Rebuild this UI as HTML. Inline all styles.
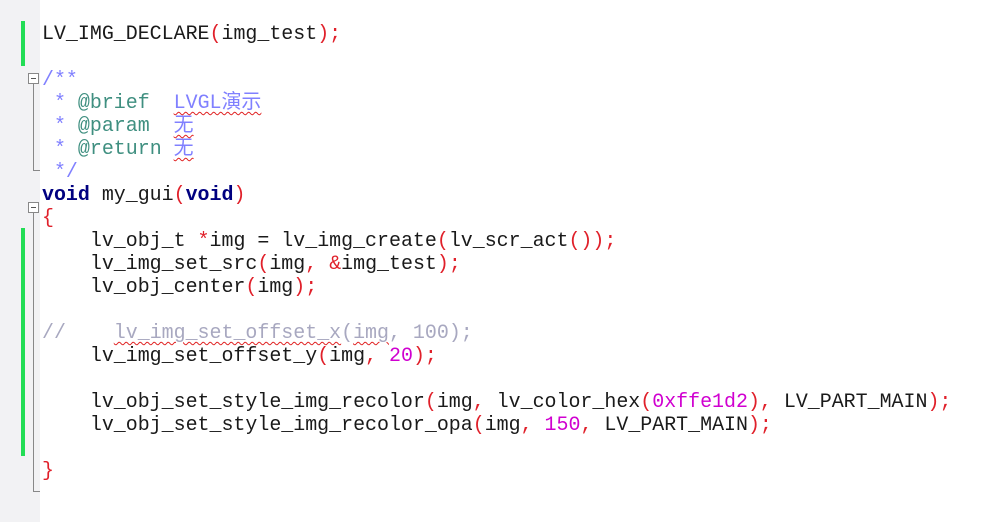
<!DOCTYPE html>
<html><head><meta charset="utf-8"><style>
body{margin:0;width:986px;height:522px;background:#fff;position:relative;overflow:hidden;font-family:"Liberation Mono","Noto Sans CJK SC",monospace;}
.g{position:absolute;left:0;top:0;width:40px;height:522px;background:#f2f2f4;}
.l{position:absolute;left:42px;font-size:19.95px;line-height:23px;white-space:pre;color:#1a1a1a;}
.o{color:#e0202a}.c{color:#8080ff}.t{color:#3f8f80}.k{color:#000080;font-weight:bold}.n{color:#d000d0}.gr{color:#a8a8c0}.w{text-decoration:underline wavy #e02020;text-decoration-thickness:1px;text-underline-offset:3px}
.bar{position:absolute;left:21px;width:4px;background:#22dd55}
.box{position:absolute;left:28px;width:9px;height:9px;border:1px solid #888;background:#fff}
.box:after{content:"";position:absolute;left:2px;top:4px;width:5px;height:1px;background:#555}
.vl{position:absolute;left:33px;width:1px;background:#888}
.hl{position:absolute;left:33px;width:7px;height:1px;background:#888}
</style></head><body>
<div class="g"></div>
<div class="bar" style="top:21px;height:45px"></div>
<div class="bar" style="top:228px;height:228px"></div>
<div class="box" style="top:73px"></div><div class="vl" style="top:84px;height:86px"></div><div class="hl" style="top:170px"></div>
<div class="box" style="top:202px"></div><div class="vl" style="top:213px;height:278px"></div><div class="hl" style="top:491px"></div>
<div class="l" style="top:22px">LV_IMG_DECLARE<span class="o">(</span>img_test<span class="o">);</span></div>
<div class="l c" style="top:68px">/**</div>
<div class="l c" style="top:91px"> * <span class="t">@brief</span>  <span class="w">LVGL演示</span></div>
<div class="l c" style="top:114px"> * <span class="t">@param</span>  <span class="w">无</span></div>
<div class="l c" style="top:137px"> * <span class="t">@return</span> <span class="w">无</span></div>
<div class="l c" style="top:160px"> */</div>
<div class="l" style="top:183px"><span class="k">void</span> my_gui<span class="o">(</span><span class="k">void</span><span class="o">)</span></div>
<div class="l o" style="top:206px">{</div>
<div class="l" style="top:229px">    lv_obj_t <span class="o">*</span>img = lv_img_create<span class="o">(</span>lv_scr_act<span class="o">());</span></div>
<div class="l" style="top:252px">    lv_img_set_src<span class="o">(</span>img<span class="o">,</span> <span class="o">&amp;</span>img_test<span class="o">);</span></div>
<div class="l" style="top:275px">    lv_obj_center<span class="o">(</span>img<span class="o">);</span></div>
<div class="l gr" style="top:321px">//    <span class="w">lv_img_set_offset_x</span>(<span class="w">img</span>, 100);</div>
<div class="l" style="top:344px">    lv_img_set_offset_y<span class="o">(</span>img<span class="o">,</span> <span class="n">20</span><span class="o">);</span></div>
<div class="l" style="top:390px">    lv_obj_set_style_img_recolor<span class="o">(</span>img<span class="o">,</span> lv_color_hex<span class="o">(</span><span class="n">0xffe1d2</span><span class="o">),</span> LV_PART_MAIN<span class="o">);</span></div>
<div class="l" style="top:413px">    lv_obj_set_style_img_recolor_opa<span class="o">(</span>img<span class="o">,</span> <span class="n">150</span><span class="o">,</span> LV_PART_MAIN<span class="o">);</span></div>
<div class="l o" style="top:459px">}</div>
</body></html>
